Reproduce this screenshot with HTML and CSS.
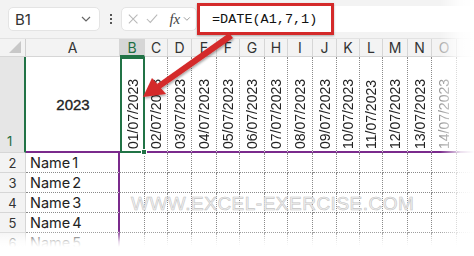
FILE: index.html
```html
<!DOCTYPE html>
<html>
<head>
<meta charset="utf-8">
<link rel="stylesheet" href="styles.css">
</head>
<body>
<div class="app">
  <div class="toolbar">
    <div class="namebox"><span class="nb-text">B1</span><svg class="chev" width="10" height="6" viewBox="0 0 10 6"><path d="M1 1l4 4 4-4" fill="none" stroke="#666" stroke-width="1.2"/></svg></div>
    <div class="vdots"><i></i><i></i><i></i></div>
    <div class="fxbox">
      <svg width="12" height="12" viewBox="0 0 12 12"><path d="M1 1l10 10M11 1L1 11" stroke="#b8b8b8" stroke-width="1.2" fill="none"/></svg>
      <svg width="14" height="12" viewBox="0 0 14 12"><path d="M1 6l4 4 8-9" stroke="#b8b8b8" stroke-width="1.2" fill="none"/></svg>
      <span class="fx">fx</span>
      <svg width="9" height="6" viewBox="0 0 9 6"><path d="M1 1l3.5 3.5L8 1" fill="none" stroke="#999" stroke-width="1.1"/></svg>
    </div>
    <div class="formula"><span class="ftext">=DATE(A1,7,1)</span></div>
  </div>

  <div class="sheet">
    <div class="corner"><span class="tri"></span></div>
    <div class="ch">A</div><div class="ch active">B</div><div class="ch">C</div><div class="ch">D</div><div class="ch">E</div><div class="ch">F</div><div class="ch">G</div><div class="ch">H</div><div class="ch">I</div><div class="ch">J</div><div class="ch">K</div><div class="ch">L</div><div class="ch">M</div><div class="ch">N</div><div class="ch faded">O</div><div class="ch last"></div>

    <div class="rh r1 active">1</div>
    <div class="a1">2023</div>
    <div class="d sel"><span>01/07/2023</span><i class="handle"></i></div>
    <div class="d"><span>02/07/2023</span></div>
    <div class="d"><span>03/07/2023</span></div>
    <div class="d"><span>04/07/2023</span></div>
    <div class="d"><span>05/07/2023</span></div>
    <div class="d"><span>06/07/2023</span></div>
    <div class="d"><span>07/07/2023</span></div>
    <div class="d"><span>08/07/2023</span></div>
    <div class="d"><span>09/07/2023</span></div>
    <div class="d"><span>10/07/2023</span></div>
    <div class="d"><span>11/07/2023</span></div>
    <div class="d"><span>12/07/2023</span></div>
    <div class="d"><span>13/07/2023</span></div>
    <div class="d faded"><span>14/07/2023</span></div>
    <div class="d last"></div>

    <div class="rh">2</div><div class="n">Name 1</div>
    <div class="c"></div><div class="c"></div><div class="c"></div><div class="c"></div><div class="c"></div><div class="c"></div><div class="c"></div><div class="c"></div><div class="c"></div><div class="c"></div><div class="c"></div><div class="c"></div><div class="c"></div><div class="c"></div><div class="c last"></div>

    <div class="rh">3</div><div class="n">Name 2</div>
    <div class="c"></div><div class="c"></div><div class="c"></div><div class="c"></div><div class="c"></div><div class="c"></div><div class="c"></div><div class="c"></div><div class="c"></div><div class="c"></div><div class="c"></div><div class="c"></div><div class="c"></div><div class="c"></div><div class="c last"></div>

    <div class="rh">4</div><div class="n">Name 3</div>
    <div class="c"></div><div class="c"></div><div class="c"></div><div class="c"></div><div class="c"></div><div class="c"></div><div class="c"></div><div class="c"></div><div class="c"></div><div class="c"></div><div class="c"></div><div class="c"></div><div class="c"></div><div class="c"></div><div class="c last"></div>

    <div class="rh">5</div><div class="n">Name 4</div>
    <div class="c"></div><div class="c"></div><div class="c"></div><div class="c"></div><div class="c"></div><div class="c"></div><div class="c"></div><div class="c"></div><div class="c"></div><div class="c"></div><div class="c"></div><div class="c"></div><div class="c"></div><div class="c"></div><div class="c last"></div>

    <div class="rh">6</div><div class="n">Name 5</div>
    <div class="c"></div><div class="c"></div><div class="c"></div><div class="c"></div><div class="c"></div><div class="c"></div><div class="c"></div><div class="c"></div><div class="c"></div><div class="c"></div><div class="c"></div><div class="c"></div><div class="c"></div><div class="c"></div><div class="c last"></div>
  </div>

  <div class="watermark">WWW.EXCEL-EXERCISE.COM</div>

  <svg class="arrow" width="474" height="256" viewBox="0 0 474 256">
    <defs>
      <filter id="sh" x="-20%" y="-20%" width="140%" height="140%">
        <feDropShadow dx="1" dy="1.5" stdDeviation="1" flood-color="#000" flood-opacity="0.35"/>
      </filter>
    </defs>
    <g filter="url(#sh)" fill="#d42a2a" stroke="none">
      <path d="M229 33 L233 38 L160 89 L157 84 Z"/>
      <path d="M143 97 L152 78 L166 94 Z"/>
    </g>
  </svg>

  <div class="fade-right"></div>
  <div class="fade-bottom"></div>
</div>
</body>
</html>
```

FILE: styles.css
```css
* { box-sizing: border-box; margin: 0; padding: 0; }
html, body { width: 474px; height: 256px; overflow: hidden; background: #fff; }
body { font-family: "Liberation Sans", Arial, sans-serif; color: #222; }

.app { position: relative; width: 474px; height: 256px; overflow: hidden; }

.toolbar {
  height: 39px;
  background: #f3f3f3;
  display: flex;
  align-items: center;
  padding-left: 8px;
  border-bottom: 1px solid #e2e2e2;
}
.namebox {
  width: 92px; height: 24px;
  background: #fff;
  border: 1px solid #e4e4e4;
  border-radius: 5px;
  display: flex; align-items: center; justify-content: space-between;
  padding: 0 8px 0 6px;
  font-family: "Inter", "Noto Sans", sans-serif;
  font-size: 15px; color: #333;
}
.vdots { width: 21px; display: flex; flex-direction: column; align-items: center; gap: 2px; }
.vdots i { display: block; width: 2px; height: 2px; background: #555; }
.fxbox {
  width: 76px; height: 24px;
  background: #fff;
  border: 1px solid #e4e4e4;
  border-radius: 5px;
  display: flex; align-items: center;
  gap: 8px;
  padding: 0 5px 0 6px;
}
.fx {
  font-family: "Liberation Serif", serif;
  font-style: italic; font-size: 15px; color: #444;
  margin-left: 3px; margin-right: -5px;
}
.formula {
  flex: 1;
  height: 26px;
  margin-left: 3px;
  background: #fff;
  display: flex; align-items: center;
}
.ftext {
  display: flex; align-items: center;
  height: 32px;
  width: 137px;
  border: 3px solid #d42a2a;
  box-shadow: 0 1px 2px rgba(0,0,0,0.3);
  padding-left: 12px;
  font-family: "Liberation Mono", monospace;
  font-size: 13.5px; color: #111;
  margin-left: -3px;
}

.sheet {
  display: grid;
  grid-template-columns: 26px 94px 25px 23px 24px 25px 23px 25px 23px 25px 24px 23px 23px 25px 24px 25px 17px;
  grid-template-rows: 18px 96px 20px 20px 20px 20px 20px;
}
.sheet > div { position: relative; }

.corner {
  background: #f3f3f3;
  border-right: 1px solid #cfcfcf;
  border-bottom: 1px solid #d6d6d6;
}
.tri {
  position: absolute; right: 4px; bottom: 3px;
  width: 0; height: 0;
  border-left: 12px solid transparent;
  border-bottom: 12px solid #c8c8c8;
}
.ch {
  background: #f3f3f3;
  border-right: 1px solid #d6d6d6;
  border-bottom: 1px solid #d6d6d6;
  display: flex; align-items: center; justify-content: center;
  font-family: "Inter", "Noto Sans", sans-serif;
  font-size: 14px; color: #333;
}
.ch.active { background: #d6d6d6; color: #1e6e42; border-bottom: 2px solid #217346; }
.ch.faded { color: #aaa; }
.ch.last { border-right: none; }

.rh {
  background: #f3f3f3;
  border-right: 1px solid #d6d6d6;
  border-bottom: 1px solid #d6d6d6;
  display: flex; align-items: center; justify-content: center;
  font-family: "Inter", "Noto Sans", sans-serif;
  font-size: 13px; color: #333;
}
.rh.r1 { align-items: flex-end; justify-content: flex-start; padding: 0 0 3px 7px; }
.rh.active { background: #e6e6e6; color: #1e6e42; border-right: 2px solid #217346; }

.a1 {
  display: flex; align-items: center; justify-content: center;
  font-size: 15px; color: #222;
  -webkit-text-stroke: 0.35px #222;
  border-bottom: 2px solid #7a2a8c;
}
.d {
  border-right: 1px dotted #8a8a8a;
  border-bottom: 2px solid #7a2a8c;
  display: flex; align-items: flex-end; justify-content: center;
  padding-bottom: 2px;
}
.d span {
  writing-mode: vertical-rl;
  transform: rotate(180deg);
  font-size: 14px; color: #222;
  line-height: 18px;
}
.d.faded span { color: #9a9a9a; }
.d.last { border-right: none; }
.d.sel { border: 2px solid #217346; }
.handle {
  position: absolute; right: -4px; bottom: -4px;
  width: 6px; height: 6px;
  background: #217346; border: 1px solid #fff;
  z-index: 2;
}

.n {
  border-right: 2px solid #7a2a8c;
  border-bottom: 1px dotted #8a8a8a;
  display: flex; align-items: center;
  padding-left: 4px;
  font-family: "Inter", "Noto Sans", sans-serif;
  font-size: 14.5px; color: #222;
  word-spacing: -2px;
}
.c {
  border-right: 1px dotted #8a8a8a;
  border-bottom: 1px dotted #8a8a8a;
}
.c.last { border-right: none; }

.watermark {
  position: absolute; left: 131px; top: 193px;
  font-family: "Liberation Sans", Arial, sans-serif;
  font-size: 19px; letter-spacing: 0.5px;
  color: #f4f4f4;
  -webkit-text-stroke: 0.6px #c4c4c4;
  pointer-events: none;
}

.arrow { position: absolute; left: 0; top: 0; pointer-events: none; }

.fade-right {
  position: absolute; top: 0; right: 0; width: 34px; height: 256px;
  background: linear-gradient(to right, rgba(255,255,255,0), rgba(255,255,255,0.85) 60%, #fff);
}
.fade-bottom {
  position: absolute; left: 0; bottom: 0; width: 474px; height: 26px;
  background: linear-gradient(to bottom, rgba(255,255,255,0), rgba(255,255,255,0.85) 45%, #fff 65%);
}
```
